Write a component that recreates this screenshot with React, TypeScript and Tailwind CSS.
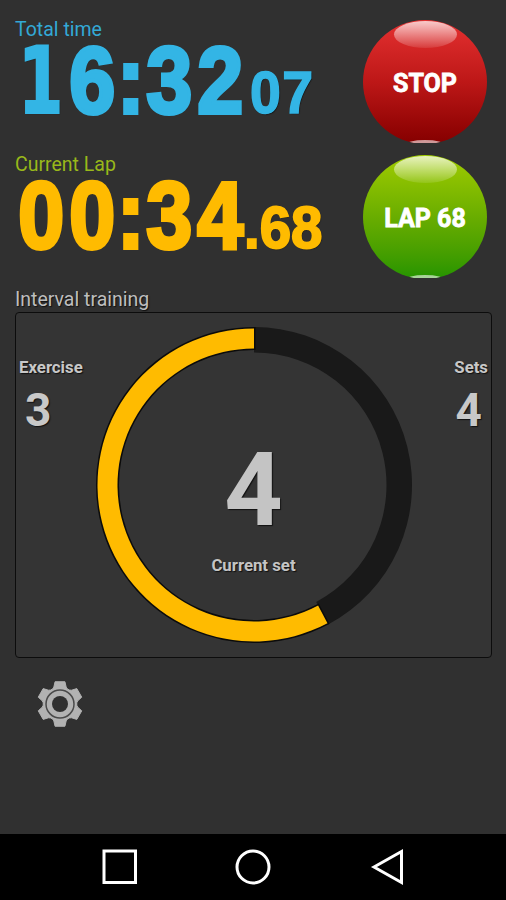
import type { ReactNode } from 'react'
import clsx from 'clsx'

const RING_CENTER = 160
const DONE_ANGLE = 152

function polar(radius: number, deg: number) {
  const rad = ((deg - 90) * Math.PI) / 180
  return `${RING_CENTER + radius * Math.cos(rad)} ${RING_CENTER + radius * Math.sin(rad)}`
}

function band(inner: number, outer: number, from: number, to: number) {
  const large = to - from > 180 ? 1 : 0
  return [
    `M${polar(outer, from)}`,
    `A${outer} ${outer} 0 ${large} 1 ${polar(outer, to)}`,
    `L${polar(inner, to)}`,
    `A${inner} ${inner} 0 ${large} 0 ${polar(inner, from)}`,
    'Z',
  ].join(' ')
}

function gearPath() {
  const points: string[] = []
  for (let i = 0; i < 6; i++) {
    const steps = [
      [16.8, -26],
      [18, -20],
      [22.8, -12.5],
      [22.8, 12.5],
      [18, 20],
      [16.8, 26],
    ]
    steps.forEach(([radius, offset]) => {
      const rad = ((i * 60 + offset - 90) * Math.PI) / 180
      points.push(`${24 + radius * Math.cos(rad)} ${24 + radius * Math.sin(rad)}`)
    })
  }
  return `M${points.join(' L')} Z`
}

function Glyph({ char }: { char: string }) {
  return (
    <span className={clsx('flex justify-center', char === ':' ? 'w-[25px]' : 'w-[51.5px]')}>
      {char === '1' ? (
        <span className="origin-center scale-x-[0.78] font-['DejaVu_Sans_Condensed','DejaVu_Sans'] text-[92px] [-webkit-text-stroke:2px_currentColor]">
          1
        </span>
      ) : (
        <span className="origin-center scale-x-[0.88] [-webkit-text-stroke:4px_currentColor]">{char}</span>
      )}
    </span>
  )
}

function Clock({ main, fraction, color }: { main: string; fraction: ReactNode; color: string }) {
  return (
    <div
      className={clsx(
        "flex h-[84px] items-baseline pt-px font-['Liberation_Sans',sans-serif] text-[94px] leading-[84px] font-bold [text-shadow:1px_1px_1px_#111]",
        color,
      )}
    >
      {main.split('').map((char, i) => (
        <Glyph key={i} char={char} />
      ))}
      {fraction}
    </div>
  )
}

function RoundButton({ label, fill }: { label: string; fill: string }) {
  return (
    <div className="h-[123px] w-[124px] overflow-hidden">
      <button
        type="button"
        className={clsx('relative flex size-[124px] items-center justify-center overflow-hidden rounded-full', fill)}
      >
        <span className="absolute top-[1px] left-[31px] h-[27px] w-[63px] rounded-[50%] bg-linear-to-b from-white/75 to-white/10" />
        <span className="absolute bottom-[-6px] left-[42px] h-[10px] w-[40px] rounded-[50%] bg-white/60" />
        <span className="relative top-px text-[25px] leading-none font-bold text-white [-webkit-text-stroke:0.8px_white]">
          {label}
        </span>
      </button>
    </div>
  )
}

function Counter({ label, value, right }: { label: string; value: number; right?: boolean }) {
  return (
    <div
      className={clsx(
        'flex w-[72px] flex-col pt-[42px] text-[#c8c8c8] [text-shadow:1px_1px_1px_#111]',
        right ? 'items-end pr-[2px]' : 'items-start pl-[2px]',
      )}
    >
      <span className="text-[16.8px] leading-[22px] font-bold">{label}</span>
      <span className={clsx('mt-[8px] text-[46px] leading-[48px] font-bold', right ? 'mr-[6px]' : 'ml-[6px]')}>
        {value}
      </span>
    </div>
  )
}

export default function App() {
  return (
    <div className="flex h-[900px] w-[506px] flex-col bg-[#303030] font-[Roboto,sans-serif]">
      <main className="flex flex-1 flex-col px-[15px]">
        <section className="flex h-[135px] justify-between pt-[18px]">
          <div>
            <h2 className="h-[20px] text-[19.5px] leading-[23px] text-[#33a9d6]">Total time</h2>
            <Clock
              main="16:32"
              color="text-[#33b5e5]"
              fraction={
                <span className="ml-[4px] origin-left scale-x-[0.94] text-[59px] tracking-[1.5px] [-webkit-text-stroke:1.5px_currentColor]">
                  07
                </span>
              }
            />
          </div>
          <div className="pt-[2px] pr-[4px]">
            <RoundButton label="STOP" fill="bg-linear-to-b from-[#e53030] via-[#bd1717] to-[#850000]" />
          </div>
        </section>

        <section className="flex h-[153px] justify-between pt-[18px]">
          <div>
            <h2 className="h-[20px] text-[19.5px] leading-[23px] text-[#99b81a]">Current Lap</h2>
            <Clock
              main="00:34"
              color="text-[#ffbb00]"
              fraction={
                <span className="-ml-[2px] origin-left scale-x-[0.94] text-[60px] [-webkit-text-stroke:2px_currentColor]">
                  .68
                </span>
              }
            />
          </div>
          <div className="pt-[2px] pr-[4px]">
            <RoundButton label="LAP 68" fill="bg-linear-to-b from-[#a0cc00] via-[#69ad00] to-[#239400]" />
          </div>
        </section>

        <h2 className="h-[24px] text-[19.5px] leading-[23px] text-[#bebebe] [text-shadow:1px_1px_1px_#111]">
          Interval training
        </h2>
        <section className="flex h-[346px] w-[477px] justify-between rounded-[4px] border border-[#0c0c0c] bg-[#343434] p-px">
          <Counter label="Exercise" value={3} />
          <div className="relative mt-[11px] size-[320px] shrink-0">
            <svg viewBox="0 0 320 320" className="size-full">
              <path d={band(132.5, 158, 0, DONE_ANGLE)} fill="#191919" />
              <path
                d={band(136.5, 156.5, DONE_ANGLE, 360)}
                fill="#ffbb00"
                stroke="#0b0b0b"
                strokeWidth="3"
                paintOrder="stroke"
              />
            </svg>
            <div className="absolute inset-0 flex flex-col items-center pt-[108px] text-[#c4c4c4] [text-shadow:1px_1px_1px_#111]">
              <span className="text-[102px] leading-[115px] font-bold">4</span>
              <span className="mt-[6px] text-[16.8px] leading-[22px] font-bold">Current set</span>
            </div>
          </div>
          <Counter label="Sets" value={4} right />
        </section>

        <button type="button" className="mt-[22px] ml-[21px] size-[48px]">
          <svg viewBox="0 0 48 48" className="size-full">
            <path d={gearPath()} fill="#b2b2b2" stroke="#b2b2b2" strokeLinejoin="round" />
            <circle cx="24" cy="24" r="14" fill="none" stroke="#4a4a4a" strokeWidth="1.5" />
            <circle cx="24" cy="24" r="8" fill="#303030" />
          </svg>
        </button>
      </main>

      <nav className="h-[66px] bg-black">
        <svg viewBox="0 0 506 66" className="h-full w-full" fill="none" stroke="#fff" strokeWidth="3">
          <rect x="104" y="17" width="31.5" height="31.5" />
          <circle cx="253" cy="33" r="16" />
          <path d="M374 33 401.5 17.5V48.5Z" />
        </svg>
      </nav>
    </div>
  )
}
